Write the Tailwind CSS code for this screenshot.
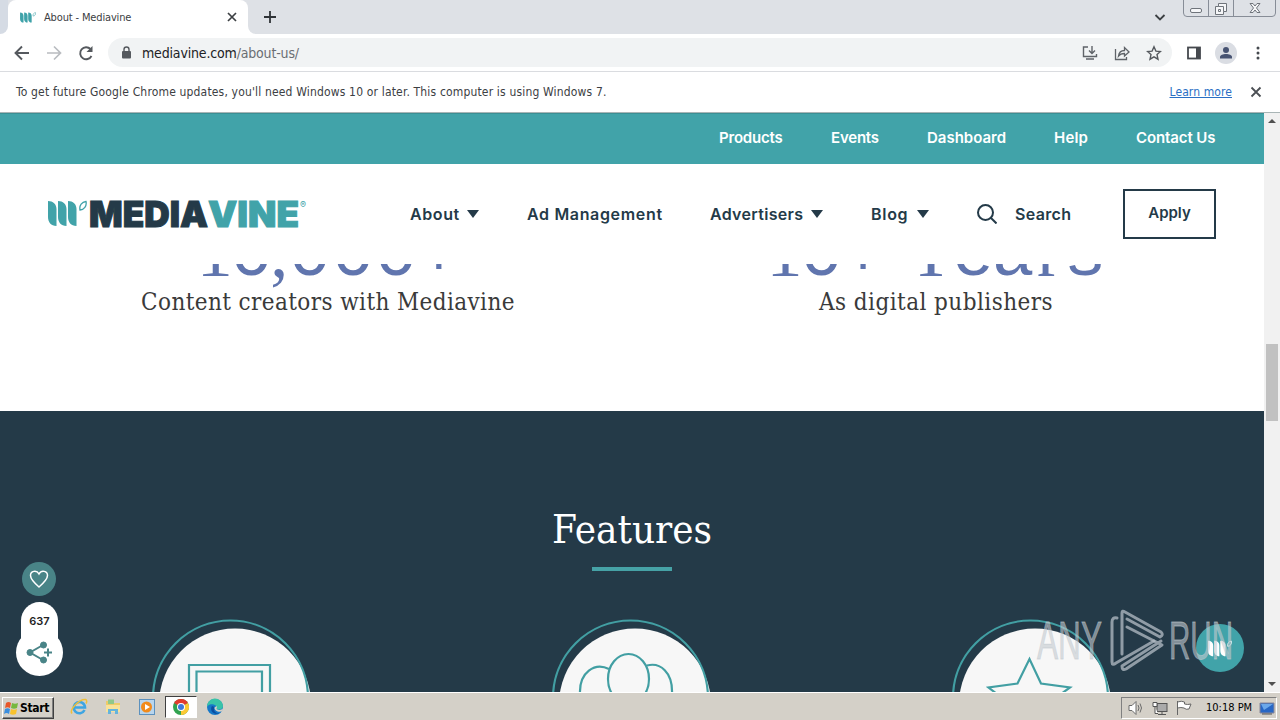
<!DOCTYPE html>
<html lang="en">

<head>
  <meta charset="UTF-8">
  <meta name="viewport" content="width=device-width, initial-scale=1.0">
  <title>About - Mediavine</title>
  <script src="https://cdn.jsdelivr.net/npm/@tailwindcss/browser@4"></script>
</head>

<body class="w-[1280px] h-[720px] overflow-hidden flex flex-col relative bg-white font-['DejaVu_Sans_Condensed','DejaVu_Sans',sans-serif] text-[#3c4043]">

  <!-- Shared shapes -->
  <svg class="hidden">
    <symbol id="leaf" viewBox="0 0 39 27">
      <path d="M0 1C5 1 8.500 4 8.500 9V26C3 26 0 22 0 17ZM10 1C15 1 18.500 4 18.500 9V26C13 26 10 22 10 17ZM20 1C25 1 28.500 4 28.500 9V26C23 26 20 22 20 17Z" fill="currentColor" />
      <path d="M32 10C31 5 34 2 38 1.500C39 6 36 10 32 10Z" fill="none" stroke="currentColor" stroke-width="1.300" />
    </symbol>
  </svg>

  <!-- Tab strip -->
  <div class="h-[34px] shrink-0 bg-[#dee1e6] flex items-end relative">
    <div class="w-2 h-full bg-white"><div class="h-full bg-[#d5dbe4] rounded-br-lg"></div></div>
    <div class="w-60 h-full bg-white rounded-t-lg flex items-center pl-3 pr-2.5">
      <svg class="w-4 h-[11px] text-[#3fa2a9]"><use href="#leaf" /></svg>
      <span class="ml-2 text-[11px] leading-none tracking-[-0.15px] whitespace-nowrap">About - Mediavine</span>
      <svg class="ml-auto w-3 h-3" viewBox="0 0 12 12"><path d="M2 2l8 8M10 2l-8 8" stroke="#3c4043" stroke-width="1.700" /></svg>
    </div>
    <div class="w-2 h-full bg-white"><div class="h-full bg-[#dee1e6] rounded-bl-lg"></div></div>
    <svg class="ml-2 mb-[11px] w-3 h-3" viewBox="0 0 12 12"><path d="M6 0v12M0 6h12" stroke="#2f3337" stroke-width="1.800" /></svg>
    <svg class="ml-auto mr-[17px] mb-[13px] w-3 h-2" viewBox="0 0 12 8"><path d="M1.500 2l4.500 4.500L10.500 2" fill="none" stroke="#3c4043" stroke-width="1.800" /></svg>
    <svg class="self-start w-[93px] h-[17px] mr-1" viewBox="0 0 93 17" fill="none" stroke="#6f747b">
      <path d="M.5 0V13Q.5 16.500 4 16.500H89Q92.500 16.500 92.500 13V0M25.500 0V16M50.500 0V16" stroke="#878d97" />
      <rect x="7.500" y="8.500" width="11" height="4" rx="1.500" fill="#f5f6f8" />
      <path d="M35.500 3.500h8v8h-3v3h-8v-8h3z" fill="#f5f6f8" /><path d="M35.500 6.500h5v5M35.500 9.500h2v2h-2z" />
      <path d="M67 3.500h3l2 2.500 2-2.500h3l-3.500 4.500 3.500 4.500h-3l-2-2.500-2 2.500h-3l3.500-4.500z" fill="#f5f6f8" />
    </svg>
  </div>

  <!-- Toolbar -->
  <div class="h-[38px] shrink-0 bg-white border-b border-[#dadce0] flex items-center">
    <svg class="ml-3.5 w-4 h-4" viewBox="0 0 16 16" fill="none" stroke="#55595e" stroke-width="1.900"><path d="M15 8H2M8 1.500L1.500 8 8 14.500" /></svg>
    <svg class="ml-4 w-4 h-4" viewBox="0 0 16 16" fill="none" stroke="#b9bcc0" stroke-width="1.700"><path d="M1 8h13M8 1.500L14.500 8 8 14.500" /></svg>
    <svg class="ml-4 w-4 h-4" viewBox="0 0 16 16" fill="none" stroke="#55595e" stroke-width="1.900"><path d="M13.500 11A6 6 0 1 1 12.500 4" /><path d="M14.500 1v6h-6z" fill="#55595e" stroke="none" /></svg>
    <div class="ml-3.5 w-[1064px] h-[29px] rounded-full bg-[#f1f3f4] flex items-center pl-3 pr-2.5">
      <svg class="w-3 h-3.5" viewBox="0 0 12 14"><rect x="2" y="5" width="9" height="7.500" rx="1" fill="#55595e" /><path d="M4 6V3.500a2.500 2.500 0 0 1 5 0V6" fill="none" stroke="#55595e" stroke-width="1.400" /></svg>
      <span class="ml-2.5 text-[14px] tracking-[-0.17px] leading-none text-[#202124] whitespace-nowrap">mediavine.com<span class="text-[#6a6e73]">/about-us/</span></span>
      <svg class="ml-auto w-4 h-4" viewBox="0 0 16 16" fill="none" stroke="#5f6368" stroke-width="1.400"><path d="M6 2H1.500v9.500h13V9M4 14h8M10 1v7M7 5.500l3 3 3-3" /></svg>
      <svg class="ml-4 w-4 h-4" viewBox="0 0 16 16" fill="none" stroke="#5f6368" stroke-width="1.300"><path d="M1.500 4v10.500h11V12M4.500 11c.5-4 3-5.500 6-5.500V2.500L15 7l-4.500 4V8.500C8 8.500 6 9 4.500 11z" /></svg>
      <svg class="ml-4 w-4 h-4" viewBox="0 0 16 16" fill="none" stroke="#55595e" stroke-width="1.400"><path d="M8 1.800l1.900 4.300 4.600.4-3.500 3.100 1 4.600L8 11.800l-4 2.400 1-4.600L1.500 6.500l4.600-.4z" /></svg>
    </div>
    <svg class="ml-[15px] w-3.5 h-3.5" viewBox="0 0 14 14"><rect x="1" y="1.500" width="12" height="11" fill="none" stroke="#45494e" stroke-width="1.800" /><path d="M9 1h4v12H9z" fill="#45494e" /></svg>
    <svg class="ml-3.5 w-[22px] h-[22px]" viewBox="0 0 22 22"><circle cx="11" cy="11" r="11" fill="#dadde3" /><circle cx="11" cy="8" r="3" fill="#475372" /><path d="M5 16.500v-1.500c0-2 3-3 6-3s6 1 6 3v1.500z" fill="#475372" /></svg>
    <svg class="ml-[19px] w-1 h-4" viewBox="0 0 4 16" fill="#45494e"><circle cx="2" cy="3" r="1.500" /><circle cx="2" cy="8" r="1.500" /><circle cx="2" cy="13" r="1.500" /></svg>
  </div>

  <!-- Update notice -->
  <div class="h-[41px] shrink-0 bg-white border-b border-[#a9b5b6] flex items-center pl-4 text-[12px] whitespace-nowrap">
    <span class="tracking-[0.165px]">To get future Google Chrome updates, you'll need Windows 10 or later. This computer is using Windows 7.</span>
    <a class="ml-auto text-[#2a6fc4] underline tracking-[0.1px]">Learn more</a>
    <svg class="ml-[18px] mr-[18px] w-3 h-3" viewBox="0 0 12 12"><path d="M1.500 1.500l9 9M10.500 1.500l-9 9" stroke="#4b4f54" stroke-width="1.800" /></svg>
  </div>

  <!-- Page -->
  <div class="h-[579px] shrink-0 flex">
    <main class="w-[1264px] h-full overflow-hidden font-['Inter',sans-serif]">
      <nav class="h-[51px] bg-[#41a3a9] border-t border-[#3b8f94] flex items-center justify-end gap-12 pr-12 pb-px text-white text-[15px] font-semibold whitespace-nowrap">
        <a class="w-16 tracking-[-0.2px]">Products</a>
        <a class="w-12 tracking-[-0.2px]">Events</a>
        <a class="w-[79px]">Dashboard</a>
        <a class="w-[34px] tracking-[0.2px]">Help</a>
        <a class="w-20 tracking-[-0.1px]">Contact Us</a>
      </nav>

      <header class="h-[100px] bg-white flex items-center pl-12 pr-12 text-[#243a48] text-[16px] font-semibold whitespace-nowrap">
        <svg class="w-[262px] h-7 overflow-visible" viewBox="0 0 262 28" font-family="Inter" font-weight="900" font-size="35.500">
          <use href="#leaf" width="39" height="27" class="text-[#41a3a9]" />
          <text x="41" y="26.500" textLength="119" lengthAdjust="spacingAndGlyphs" fill="#243a48" stroke="#243a48" stroke-width="1">MEDIA</text>
          <text x="160" y="26.500" textLength="91" lengthAdjust="spacingAndGlyphs" fill="#41a3a9" stroke="#41a3a9" stroke-width="1">VINE</text>
          <text x="252" y="8" font-size="9" font-weight="400" fill="#41a3a9">®</text>
        </svg>
        <a class="ml-[100px] w-[57px] tracking-[0.6px]">About</a>
        <svg class="w-3 h-2" viewBox="0 0 12 8"><path d="M0 0h12L6 8z" fill="#243a48" /></svg>
        <a class="ml-12 w-[136px] tracking-[0.66px]">Ad Management</a>
        <a class="ml-[47px] w-[101px] tracking-[0.3px]">Advertisers</a>
        <svg class="w-3 h-2" viewBox="0 0 12 8"><path d="M0 0h12L6 8z" fill="#243a48" /></svg>
        <a class="ml-12 w-[46px] tracking-[0.7px]">Blog</a>
        <svg class="w-3 h-2" viewBox="0 0 12 8"><path d="M0 0h12L6 8z" fill="#243a48" /></svg>
        <svg class="ml-12 w-5 h-5" viewBox="0 0 20 20" fill="none" stroke="#243a48" stroke-width="2"><circle cx="8.500" cy="8.500" r="7.500" /><path d="M14 14l5.500 5.500" /></svg>
        <a class="ml-[18px] tracking-[0.35px]">Search</a>
        <a class="ml-auto w-[93px] h-[50px] border-2 border-[#243a48] flex items-center justify-center pb-0.5 text-[15px]">Apply</a>
      </header>

      <!-- Stats, scrolled partly under the header -->
      <section class="h-[147px] px-6 grid grid-cols-2 overflow-hidden text-center text-[#3a3a3a] font-['DejaVu_Serif_Condensed','DejaVu_Serif',serif]">
        <div>
          <div class="-mt-[48px] h-[80px] leading-[80px] text-[72px] text-[#6075ae] font-['Liberation_Mono',monospace] flex justify-center">
            <span class="w-[37px] -mt-1 flex justify-center font-['Liberation_Serif',serif]">1</span><span class="w-[37px] flex justify-center">0</span><span class="w-[18px] -mt-1 flex justify-center font-['Liberation_Serif',serif]">,</span><span>000</span><span class="w-[42px] flex justify-center">+</span>
          </div>
          <p class="-mt-2.5 text-[24px] leading-8 tracking-[0.4px] whitespace-nowrap">Content creators with Mediavine</p>
        </div>
        <div>
          <div class="-mt-[48px] h-[80px] leading-[80px] text-[72px] text-[#6075ae] font-['Liberation_Mono',monospace] flex justify-center">
            <span class="w-[37px] -mt-1 flex justify-center font-['Liberation_Serif',serif]">1</span><span class="w-[37px] flex justify-center">0</span><span class="w-[46px] flex justify-center">+</span>
            <span class="w-[46px] ml-[22px] -mt-1 flex justify-center font-['Liberation_Serif',serif]">Y</span><span class="w-[38px] flex justify-center">e</span><span class="w-[42px] flex justify-center">a</span><span class="w-[30px] -mt-1 flex justify-center font-['Liberation_Serif',serif]">r</span><span class="w-[42px] flex justify-center">s</span>
          </div>
          <p class="-mt-2.5 text-[24px] leading-8 tracking-[0.45px] whitespace-nowrap">As digital publishers</p>
        </div>
      </section>

      <!-- Features -->
      <section class="h-[281px] bg-[#243a48] flex flex-col items-center pt-[90px]">
        <h2 class="text-[40px] leading-[56px] text-white whitespace-nowrap font-['DejaVu_Serif_Condensed','DejaVu_Serif',serif]">Features</h2>
        <div class="mt-2.5 w-20 h-1 bg-[#46a2a6]"></div>
        <svg class="mt-[39px] w-[1264px] h-[82px] shrink-0" viewBox="0 610 1264 82" fill="none" stroke="#429fa3" stroke-width="2.200">
          <g fill="#f7f7f7" stroke="none"><circle cx="235" cy="704.500" r="76" /><circle cx="635" cy="704.500" r="76" /><circle cx="1035" cy="704.500" r="76" /></g>
          <circle cx="230.500" cy="698" r="77.500" /><circle cx="630.500" cy="698" r="77.500" /><circle cx="1030.500" cy="698" r="77.500" />
          <path d="M189 694V665H270V694M196.500 694V671.500H262V694" />
          <ellipse cx="628.500" cy="679" rx="20.500" ry="25" fill="#f7f7f7" />
          <path d="M580 694C579 672 595 662 609 669M647 665.500C660 662 673 672 672 694" />
          <path d="M997 694L988.500 687.500 1017.500 683.500 1029.500 659 1041 683.500 1070 687.500 1061 694" />
        </svg>
      </section>
    </main>

    <!-- Scrollbar -->
    <div class="w-4 h-full bg-[#f1f1f1] flex flex-col items-center pt-[6px] pb-[6px]">
      <svg class="w-2 h-1 shrink-0" viewBox="0 0 8 4"><path d="M0 4h8L4 0z" fill="#505050" /></svg>
      <div class="mt-[221px] w-3 h-[77px] bg-[#c1c1c1]"></div>
      <svg class="mt-auto w-2 h-1 shrink-0" viewBox="0 0 8 4"><path d="M0 0h8L4 4z" fill="#505050" /></svg>
    </div>
  </div>

  <!-- Taskbar -->
  <div class="h-7 shrink-0 bg-[#d4d0c8] border-t border-white flex items-center text-black">
    <div class="ml-0.5 mt-0.5 w-[52px] h-[22px] border border-t-white border-l-white border-r-[#404040] border-b-[#404040] shadow-[inset_-1px_-1px_#808080] flex items-center text-[12px] font-bold tracking-[-0.3px]">
      <svg class="w-4 h-4 mr-px" viewBox="0 0 16 16"><path d="M3 3q2.500-2 5 0L7 8q-2.500-1.500-5 0z" fill="#e8572a" /><path d="M9 3q3 1.500 6 0l-1 5q-3 1.500-6 0z" fill="#76b83f" /><path d="M2 9q2.500-1.500 5 0l-1 5q-2.500-2-5 0z" fill="#3b8ede" /><path d="M8 9q3 1.500 6 0l-1 5q-3 1.500-6 0z" fill="#f8c22d" /></svg>
      <span class="leading-none">Start</span>
    </div>
    <svg class="ml-[16px] w-[18px] h-[18px]" viewBox="0 0 18 18" fill="none"><path d="M14.500 12A5.600 5.600 0 1 1 15 9.500H5" stroke="#3ea5e2" stroke-width="2.600" /><path d="M2 15.500C-1 12 9 1 15.500 1.500 17 2 17 4 16 5.500" stroke="#efbf39" stroke-width="1.500" /></svg>
    <svg class="ml-4 w-[18px] h-[18px]" viewBox="0 0 18 18"><path d="M2 3h5l1 2h8v9H2z" fill="#eecb69" /><path d="M4 1.500h6V6H4z" fill="#8fc88a" /><path d="M2 7h14v7H2z" fill="#f8e29a" /><path d="M4 16v-5h10v5h-3v-3H7v3z" fill="#65b4dc" /></svg>
    <svg class="ml-4 w-[18px] h-[18px]" viewBox="0 0 18 18"><rect x="1.500" y="1.500" width="15" height="15" fill="#b8d5ed" stroke="#5c91be" /><circle cx="8.500" cy="9" r="5.500" fill="#f18b1c" /><path d="M7 6l5 3-5 3z" fill="#fff" /></svg>
    <div class="ml-[9px] w-8 h-[22px] bg-white border border-t-[#404040] border-l-[#404040] border-r-white border-b-white flex items-center justify-center">
      <svg class="w-4 h-4" viewBox="0 0 16 16"><circle cx="8" cy="8" r="8" fill="#31a350" /><path d="M8 8L1.070 4A8 8 0 0 1 14.930 4z" fill="#e33b2e" /><path d="M8 8L14.930 4A8 8 0 0 1 8 16z" fill="#fcc934" /><circle cx="8" cy="8" r="4" fill="#fff" /><circle cx="8" cy="8" r="3" fill="#3f79dc" /></svg>
    </div>
    <svg class="ml-[9px] w-[18px] h-[18px]" viewBox="0 0 18 18"><circle cx="9" cy="9" r="8" fill="#1678c8" /><path d="M1 9A8 8 0 0 1 17 8C17 12 12 12 10.500 11 12 8 8 5.500 4 6.500 2.500 7 1.500 8 1 9z" fill="#39c3a8" /><path d="M6 8C3 13 8 17 13.500 15.500 9 15.500 7 12 8.500 9z" fill="#0b4da0" /><path d="M10.500 8c1 1 0 2.500 0 3 2 1.500 5 1 6.500-.5L16.500 13C13 15 8 12.500 8.500 9.500z" fill="#d4d0c8" /></svg>
    <div class="ml-auto mr-[3px] mt-0.5 w-[156px] h-[22px] border border-t-[#808080] border-l-[#808080] border-r-white border-b-white flex items-center pl-1.5 text-[11px]">
      <svg class="w-4 h-4" viewBox="0 0 16 16" fill="#fff" stroke="#6b6b6b"><path d="M1 5.500h3l4-4v13l-4-4H1z" /><path d="M10 5q2 3 0 6M12 3.500q3 4.500 0 9" fill="none" /></svg>
      <svg class="ml-2 w-4 h-4" viewBox="0 0 16 16" stroke="#555"><rect x="5" y="3.500" width="10" height="8" fill="#aaa" /><path d="M6 14.500h8M10 12v2" fill="none" /><path d="M1 2.500h4v4H1zM3 7v6.500h3" fill="#fff" /></svg>
      <svg class="ml-2 w-4 h-4" viewBox="0 0 16 16" fill="#fff" stroke="#666"><path d="M1.500 1v14M1.500 2q4-1.500 7 0v2q3 1 6.500 0l-2 5q-3 1-5-1-3-1-6.500 0z" /></svg>
      <span class="ml-[14px] leading-none whitespace-nowrap">10:18 PM</span>
      <svg class="ml-auto mr-px w-4 h-4" viewBox="0 0 16 16"><path d="M1 3h14v10H1z" fill="#2867c5" stroke="#889" /><path d="M2 4h12L5 10z" fill="#6ba8ea" /><path d="M3 14h10" stroke="#555" /></svg>
    </div>
  </div>

  <!-- Floating share buttons -->
  <div class="absolute left-4 top-[562px] w-[47px] flex flex-col items-center">
    <div class="mr-px w-[34px] h-[34px] rounded-full bg-[#498487] flex items-center justify-center">
      <svg class="w-5 h-5" viewBox="0 0 20 20" fill="none" stroke="#fff" stroke-width="1.500"><path d="M10 18C6 14.500 1.500 10.500 1.500 6.500 1.500 2 7.500.500 10 5 12.500.500 18.500 2 18.500 6.500 18.500 10.500 14 14.500 10 18z" /></svg>
    </div>
    <div class="mt-1.5 w-[37px] h-[40px] rounded-t-full bg-white text-center pt-[13px] text-[11px] leading-3 font-semibold text-[#222] font-['Inter',sans-serif]">637</div>
    <div class="-mt-[13px] w-[47px] h-[47px] rounded-full bg-white flex items-center justify-center">
      <svg class="w-[27px] h-6" viewBox="0 0 27 24" fill="#498487" stroke="#498487"><path d="M17 4L4 11.500 17 19" fill="none" stroke-width="2" /><circle cx="17.500" cy="4" r="3" /><circle cx="4" cy="11.500" r="3" /><circle cx="17.500" cy="19" r="3" /><path d="M18 11.500h8M22 7.500v8" stroke-width="2" /></svg>
    </div>
  </div>

  <!-- Chat bubble -->
  <div class="absolute left-[1196px] top-[624px] w-12 h-12 rounded-full bg-[#41a3a9] flex items-center justify-center text-white">
    <svg class="w-6 h-[17px]"><use href="#leaf" /></svg>
  </div>

  <!-- Watermark -->
  <svg class="absolute left-[1030px] top-[604px] w-[210px] h-[74px]" viewBox="1030 604 210 74" fill="#c3cad0" fill-opacity=".6" stroke="#c3cad0" stroke-opacity=".6" stroke-width=".8" font-family="Liberation Sans Narrow, Liberation Sans" font-size="53">
    <text x="1037" y="659" textLength="65" lengthAdjust="spacingAndGlyphs">ANY</text>
    <text x="1169" y="659" textLength="64" lengthAdjust="spacingAndGlyphs">RUN</text>
    <g fill="none" stroke="#b4bec6" stroke-opacity=".75" stroke-width="3" stroke-linejoin="round" stroke-linecap="round">
      <path d="M1117 618Q1112 617 1112 622V662Q1112 666 1116 663L1154 641" />
      <path d="M1122 654V613Q1122 610 1125 612L1161 632Q1164 635 1160 637L1127 619" />
      <path d="M1127 627L1162 645L1126 669Q1122 671 1122 666L1161 641" />
    </g>
  </svg>

</body>

</html>
